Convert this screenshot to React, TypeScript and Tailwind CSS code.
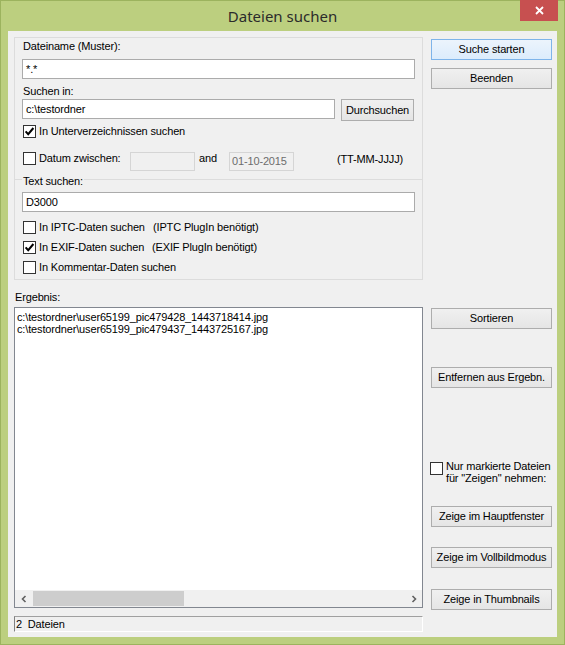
import type { ReactNode } from 'react'

const results = [
  'c:\\testordner\\user65199_pic479428_1443718414.jpg',
  'c:\\testordner\\user65199_pic479437_1443725167.jpg',
]

function Check({ checked = false }: { checked?: boolean }) {
  return (
    <span className="flex h-[13px] w-[13px] shrink-0 items-center justify-center border border-[#333333] bg-white">
      {checked && (
        <svg width="11" height="11" viewBox="0 0 11 11">
          <path d="M1.6 5.4 L4.2 8.2 L9.4 2" fill="none" stroke="#000" strokeWidth="2" />
        </svg>
      )}
    </span>
  )
}

function CheckRow({ checked, children }: { checked?: boolean; children: ReactNode }) {
  return (
    <div className="ml-[1px] flex h-[13px] items-center">
      <Check checked={checked} />
      <span className="ml-[3px] flex whitespace-nowrap">{children}</span>
    </div>
  )
}

function Btn({ children, primary = false, className = '' }: { children: ReactNode; primary?: boolean; className?: string }) {
  const look = primary
    ? 'border-[#7eb4ea] bg-linear-to-b from-[#ecf4fc] to-[#dcecfc]'
    : 'border-[#adadad] bg-linear-to-b from-[#f0f0f0] to-[#e5e5e5]'
  return (
    <div className={`flex h-[21px] shrink-0 items-center justify-center whitespace-nowrap border ${look} ${className}`}>
      {children}
    </div>
  )
}

function Field({ value = '', className = '' }: { value?: string; className?: string }) {
  return (
    <div className={`flex h-[20px] shrink-0 items-center border border-[#ababab] bg-white pl-[3px] ${className}`}>
      {value}
    </div>
  )
}

function DisabledField({ value = '' }: { value?: string }) {
  return (
    <div className="flex h-[19px] w-[65px] shrink-0 items-center border border-[#d5d5d5] bg-[#f0f0f0] pl-[2px] text-[#6d6d6d]">
      {value}
    </div>
  )
}

function SearchPanel() {
  return (
    <div className="mt-[6px] flex h-[243px] flex-col border border-[#dcdcdc] px-[7px]">
      <div className="mt-[2px] pl-[1px]">Dateiname (Muster):</div>
      <Field value="*.*" className="mt-[6px]" />

      <div className="mt-[6px] pl-[1px]">Suchen in:</div>
      <div className="mt-[1px] flex h-[22px] items-start">
        <Field value="c:\testordner" className="w-[313px]" />
        <Btn className="ml-[6px] h-[22px] w-[73px]">Durchsuchen</Btn>
      </div>

      <div className="mt-[4px]">
        <CheckRow checked>In Unterverzeichnissen suchen</CheckRow>
      </div>

      <div className="mt-[14px] flex h-[19px] items-start">
        <div className="w-[108px]">
          <CheckRow>Datum zwischen:</CheckRow>
        </div>
        <DisabledField />
        <span className="w-[34px] pl-[4px]">and</span>
        <DisabledField value="01-10-2015" />
        <span className="ml-[43px] mt-[1px]">(TT-MM-JJJJ)</span>
      </div>

      {/* group box caption over its top line */}
      <div className="relative -mx-[7px] mt-[4px] h-[13px]">
        <div className="absolute left-0 right-0 top-[4px] border-t border-[#dcdcdc]" />
        <span className="absolute left-[7px] top-0 bg-[#f0f0f0] px-[1px]">Text suchen:</span>
      </div>
      <Field value="D3000" className="mt-[4px]" />

      <div className="mt-[9px]">
        <CheckRow>
          <span className="w-[114px]">In IPTC-Daten suchen</span>
          <span>(IPTC PlugIn benötigt)</span>
        </CheckRow>
      </div>
      <div className="mt-[7px]">
        <CheckRow checked>
          <span className="w-[113px]">In EXIF-Daten suchen</span>
          <span>(EXIF PlugIn benötigt)</span>
        </CheckRow>
      </div>
      <div className="mt-[7px]">
        <CheckRow>In Kommentar-Daten suchen</CheckRow>
      </div>
    </div>
  )
}

function ResultList() {
  return (
    <div className="mt-[3px] flex h-[301px] flex-col border border-[#828790] bg-white">
      <div className="flex-1 pl-[2px] pt-[3px] leading-[12px]">
        {results.map((r) => (
          <div key={r} className="whitespace-nowrap">
            {r}
          </div>
        ))}
      </div>
      {/* horizontal scroll bar */}
      <div className="flex h-[17px] items-center bg-[#f0f0f0]">
        <div className="flex h-full w-[17px] items-center justify-center">
          <svg width="8" height="8" viewBox="0 0 8 8">
            <path d="M5.5 1 L2.5 4 L5.5 7" fill="none" stroke="#606060" strokeWidth="1.6" />
          </svg>
        </div>
        <div className="ml-[1px] h-[15px] w-[151px] bg-[#cdcdcd]" />
        <div className="flex-1" />
        <div className="flex h-full w-[17px] items-center justify-center">
          <svg width="8" height="8" viewBox="0 0 8 8">
            <path d="M2.5 1 L5.5 4 L2.5 7" fill="none" stroke="#606060" strokeWidth="1.6" />
          </svg>
        </div>
      </div>
    </div>
  )
}

export default function App() {
  return (
    <div className="flex h-[645px] w-[565px] flex-col border border-[#9cb35e] bg-[#bccf7f] text-[11px] leading-[13px] tracking-[-0.15px] text-black [font-family:Liberation_Sans,Arial,sans-serif]">
      <div className="relative flex h-[30px] shrink-0 items-center justify-center">
        <span className="text-[15px] tracking-normal text-[#2b2b2b] [font-family:Noto_Sans,Open_Sans,sans-serif]">
          Dateien suchen
        </span>
        <div className="absolute -top-[1px] right-[6px] flex h-[21px] w-[38px] items-center justify-center bg-[#c75050]">
          <svg width="9" height="9" viewBox="0 0 9 9">
            <path d="M1 1 L8 8 M8 1 L1 8" stroke="#fff" strokeWidth="1.8" />
          </svg>
        </div>
      </div>

      <div className="mx-[7px] flex h-[606px] shrink-0 items-start bg-[#f0f0f0]">
        <div className="ml-[6px] flex w-[409px] flex-col">
          <SearchPanel />
          <div className="mt-[11px] pl-[1px]">Ergebnis:</div>
          <ResultList />
          <div className="mt-[8px] flex h-[16px] items-center whitespace-pre border border-b-white border-l-[#808080] border-r-white border-t-[#a0a0a0] pl-[1px]">
            2  Dateien
          </div>
        </div>

        <div className="ml-[8px] flex w-[121px] flex-col">
          <Btn primary className="mt-[8px]">Suche starten</Btn>
          <Btn className="mt-[8px]">Beenden</Btn>
          <Btn className="mt-[219px]">Sortieren</Btn>
          <Btn className="mt-[38px]">Entfernen aus Ergebn.</Btn>
          <div className="-ml-[1px] mt-[72px] flex items-start">
            <div className="mt-[2px]">
              <Check />
            </div>
            <div className="ml-[3px] whitespace-nowrap leading-[12px]">
              Nur markierte Dateien
              <br />
              für "Zeigen" nehmen:
            </div>
          </div>
          <Btn className="mt-[22px]">Zeige im Hauptfenster</Btn>
          <Btn className="mt-[20px]">Zeige im Vollbildmodus</Btn>
          <Btn className="mt-[21px]">Zeige in Thumbnails</Btn>
        </div>
      </div>
    </div>
  )
}
